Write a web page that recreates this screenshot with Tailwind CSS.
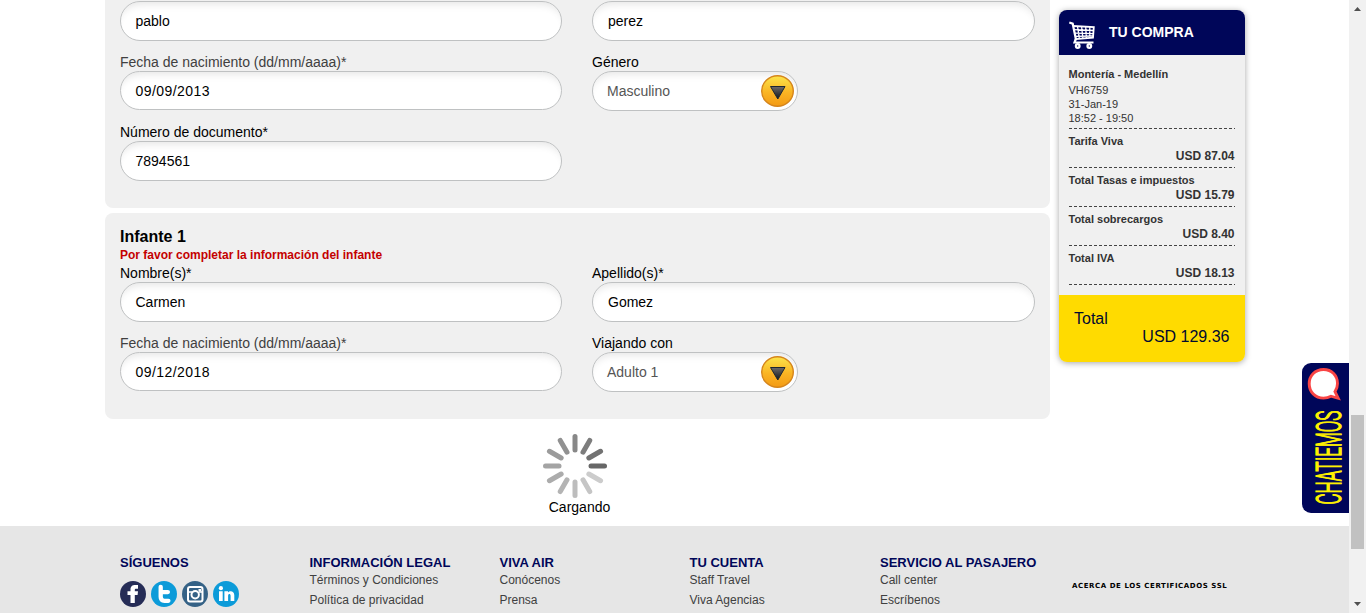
<!DOCTYPE html>
<html lang="es">
<head>
<meta charset="utf-8">
<title>Viva Air - Pasajeros</title>
<script src="https://cdn.jsdelivr.net/npm/@tailwindcss/browser@4"></script>
</head>
<body class="bg-white overflow-hidden font-['Liberation_Sans',Arial,sans-serif] text-[14px] text-black">
<div class="flex h-[613px] w-[1366px] overflow-hidden">
  <div class="relative flex h-full w-[1349px] flex-col">
    <div class="flex h-[526px] shrink-0 items-start gap-[9px] pl-[105px]">
      <main class="w-[945px]">
        <section class="rounded-b-[8px] bg-[#f0f0f0] px-[15px] h-[208px] pt-px">
          <div class="flex h-[52px] gap-[30px]">
            <div class="flex h-10 w-[442px] items-center rounded-[20px] border border-[#bfc1c2] bg-white px-[14.5px] shadow-[inset_0_8px_8px_-6px_#e4e4e4]">pablo</div>
            <div class="flex h-10 w-[443px] items-center rounded-[20px] border border-[#bfc1c2] bg-white px-[15px] shadow-[inset_0_8px_8px_-6px_#e4e4e4]">perez</div>
          </div>
          <div class="flex h-[70px] gap-[30px]">
            <div class="w-[442px]">
              <div class="h-[18px] leading-[18px] text-[#404040]">Fecha de nacimiento (dd/mm/aaaa)*</div>
              <div class="flex h-[39px] items-center rounded-[20px] border border-[#bfc1c2] bg-white px-[14.5px] pt-px tracking-[0.45px] shadow-[inset_0_8px_8px_-6px_#e4e4e4]">09/09/2013</div>
            </div>
            <div>
              <div class="h-[18px] leading-[18px]">Género</div>
              <div class="flex h-10 w-[206px] items-center justify-between rounded-[20px] border border-[#bfc1c2] bg-white pl-[14px] pr-[3px] text-[#555] shadow-[inset_0_8px_8px_-6px_#e4e4e4]">
                <span>Masculino</span>
                <svg width="33" height="32" viewBox="0 0 33 32"><defs><linearGradient id="gold" x1="0" y1="0" x2="0" y2="1"><stop offset="0" stop-color="#fce54a"/><stop offset=".55" stop-color="#fab424"/><stop offset="1" stop-color="#f39a14"/></linearGradient><linearGradient id="tri" x1="0" y1="0" x2="0" y2="1"><stop offset="0" stop-color="#6e6a68"/><stop offset=".6" stop-color="#33363a"/><stop offset="1" stop-color="#101820"/></linearGradient></defs><ellipse cx="16.500" cy="16" rx="15.800" ry="15.300" fill="url(#gold)" stroke="#d5851c" stroke-width="1.400"/><path d="M9.500 11.500h14.500L16.800 24z" fill="url(#tri)" stroke="#1d2630"/></svg>
              </div>
            </div>
          </div>
          <div class="w-[442px]">
            <div class="h-[18px] leading-[18px]">Número de documento*</div>
            <div class="flex h-10 items-center rounded-[20px] border border-[#bfc1c2] bg-white px-[14.5px] shadow-[inset_0_8px_8px_-6px_#e4e4e4]">7894561</div>
          </div>
        </section>

        <section class="mt-[5px] h-[206px] rounded-[8px] bg-[#f0f0f0] px-[15px] pt-[14px]">
          <h2 class="h-[19px] text-[16px] leading-[19px] font-bold">Infante 1</h2>
          <p class="h-[18px] text-[12px] leading-[18px] font-bold text-[#c40000]">Por favor completar la información del infante</p>
          <div class="flex h-[70px] gap-[30px]">
            <div class="w-[442px]">
              <div class="h-[18px] leading-[18px]">Nombre(s)*</div>
              <div class="flex h-10 items-center rounded-[20px] border border-[#bfc1c2] bg-white px-[14.5px] shadow-[inset_0_8px_8px_-6px_#e4e4e4]">Carmen</div>
            </div>
            <div class="w-[443px]">
              <div class="h-[18px] leading-[18px]">Apellido(s)*</div>
              <div class="flex h-10 items-center rounded-[20px] border border-[#bfc1c2] bg-white px-[15px] shadow-[inset_0_8px_8px_-6px_#e4e4e4]">Gomez</div>
            </div>
          </div>
          <div class="flex gap-[30px]">
            <div class="w-[442px]">
              <div class="h-[18px] leading-[18px] text-[#404040]">Fecha de nacimiento (dd/mm/aaaa)*</div>
              <div class="flex h-[39px] items-center rounded-[20px] border border-[#bfc1c2] bg-white px-[14.5px] pt-px tracking-[0.45px] shadow-[inset_0_8px_8px_-6px_#e4e4e4]">09/12/2018</div>
            </div>
            <div>
              <div class="h-[18px] leading-[18px]">Viajando con</div>
              <div class="flex h-10 w-[206px] items-center justify-between rounded-[20px] border border-[#bfc1c2] bg-white pl-[14px] pr-[3px] text-[#555] shadow-[inset_0_8px_8px_-6px_#e4e4e4]">
                <span>Adulto 1</span>
                <svg width="33" height="32" viewBox="0 0 33 32"><ellipse cx="16.500" cy="16" rx="15.800" ry="15.300" fill="url(#gold)" stroke="#d5851c" stroke-width="1.400"/><path d="M9.500 11.500h14.500L16.800 24z" fill="url(#tri)" stroke="#1d2630"/></svg>
              </div>
            </div>
          </div>
        </section>

        <div class="flex w-[949px] flex-col items-center pt-[15px]">
          <svg class="mr-[9px]" width="64" height="64" viewBox="-32 -32 64 64" stroke-width="5" stroke-linecap="round">
            <path d="M16 0H29.500" stroke="#676767"/>
            <path d="M16 0H29.500" stroke="#cccccc" transform="rotate(30)"/>
            <path d="M16 0H29.500" stroke="#c5c5c5" transform="rotate(60)"/>
            <path d="M16 0H29.500" stroke="#bdbdbd" transform="rotate(90)"/>
            <path d="M16 0H29.500" stroke="#b4b4b4" transform="rotate(120)"/>
            <path d="M16 0H29.500" stroke="#acacac" transform="rotate(150)"/>
            <path d="M16 0H29.500" stroke="#a4a4a4" transform="rotate(180)"/>
            <path d="M16 0H29.500" stroke="#9b9b9b" transform="rotate(210)"/>
            <path d="M16 0H29.500" stroke="#919191" transform="rotate(240)"/>
            <path d="M16 0H29.500" stroke="#888888" transform="rotate(270)"/>
            <path d="M16 0H29.500" stroke="#7d7d7d" transform="rotate(300)"/>
            <path d="M16 0H29.500" stroke="#727272" transform="rotate(330)"/>
          </svg>
          <div class="leading-[18px]">Cargando</div>
        </div>
      </main>

      <aside class="mt-[10px] h-[352px] w-[186px] overflow-hidden rounded-[8px] bg-[#f0f0f0] text-[11px] text-[#333] shadow-[0_1px_6px_rgba(0,0,0,0.35)]">
        <div class="flex h-[45px] items-center gap-[14px] bg-[#000659] pl-[10px] text-[14px] font-bold text-white">
          <svg class="mt-[4px]" width="26" height="28" viewBox="0 0 26 28" fill="none" stroke="#fff"><path d="M0.300 1.500l3.400 1.200 3.400 16.600" stroke-width="2.200"/><path d="M4 5L24.800 6.200 24 16.600 6.500 18.200" stroke-width="1.800"/><path d="M4.700 8.700L24.500 9.500M5.300 12.200L24.300 12.700M6 15.400L24 15M8.500 5.200L10.400 17.800M12.600 5.500L13.900 17.500M16.700 5.700L17.400 17.200M20.800 6L20.700 17" stroke-width="1.300"/><path d="M6.700 18.200l-1.200 3.300H24.500" stroke-width="2.200"/><circle cx="8.700" cy="25" r="1.800" stroke-width="2.300"/><circle cx="20.300" cy="25" r="1.800" stroke-width="2.300"/></svg>
          <span>TU COMPRA</span>
        </div>
        <div class="h-[240px] pl-[9.5px] pr-[10.5px] pt-[12px]">
          <div class="h-[16px] leading-[14px] font-bold">Montería - Medellín</div>
          <div class="leading-[14px]">VH6759</div>
          <div class="leading-[14px]">31-Jan-19</div>
          <div class="leading-[14px]">18:52 - 19:50</div>
          <div class="h-px w-[166px] mt-[3px] bg-[repeating-linear-gradient(90deg,#444_0_3px,transparent_3px_5px)]"></div>
          <div class="h-[38px] pt-[5px] font-bold"><div class="leading-[14px]">Tarifa Viva</div><div class="text-right text-[12px] leading-[17px]">USD 87.04</div></div>
          <div class="h-px w-[166px] bg-[repeating-linear-gradient(90deg,#444_0_3px,transparent_3px_5px)]"></div>
          <div class="h-[38px] pt-[5px] font-bold"><div class="leading-[14px]">Total Tasas e impuestos</div><div class="text-right text-[12px] leading-[17px]">USD 15.79</div></div>
          <div class="h-px w-[166px] bg-[repeating-linear-gradient(90deg,#444_0_3px,transparent_3px_5px)]"></div>
          <div class="h-[38px] pt-[5px] font-bold"><div class="leading-[14px]">Total sobrecargos</div><div class="text-right text-[12px] leading-[17px]">USD 8.40</div></div>
          <div class="h-px w-[166px] bg-[repeating-linear-gradient(90deg,#444_0_3px,transparent_3px_5px)]"></div>
          <div class="h-[38px] pt-[5px] font-bold"><div class="leading-[14px]">Total IVA</div><div class="text-right text-[12px] leading-[17px]">USD 18.13</div></div>
          <div class="h-px w-[166px] bg-[repeating-linear-gradient(90deg,#444_0_3px,transparent_3px_5px)]"></div>
        </div>
        <div class="h-[67px] bg-[#ffdb00] pl-[15px] pr-[15.5px] pt-[15px] text-[16px] leading-[18px] text-[#000a30]">
          <div>Total</div>
          <div class="text-right">USD 129.36</div>
        </div>
      </aside>
    </div>

    <footer class="flex h-[87px] bg-[#e6e6e6] pl-[120px] pt-[28px] text-[12px] leading-[20px] text-[#404040]">
      <div class="w-[189.5px]">
        <h3 class="h-4 text-[13px] leading-[17px] font-bold text-[#000659]">SÍGUENOS</h3>
        <div class="mt-[11px] flex gap-[5px]">
          <svg width="26" height="26" viewBox="0 0 26 26"><circle cx="13" cy="13" r="13" fill="#252c56"/><path d="M10.500 22v-8H7.500v-3.800h3V8.500C10.500 5.200 12.400 4 15.300 4H18v3.700h-1.700c-1.200 0-1.500.5-1.500 1.300v1.200h3.200L17.600 14h-2.800v8z" fill="#fff"/></svg>
          <svg width="26" height="26" viewBox="0 0 26 26"><circle cx="13" cy="13" r="13" fill="#0c9bd9"/><path d="M10.300 6v10c0 2.800 1.300 4 3.800 4H18M10.300 11.300H17.500" fill="none" stroke="#fff" stroke-width="4.300" stroke-linecap="round" stroke-linejoin="round" transform="translate(-.6 -.2)"/></svg>
          <svg width="26" height="26" viewBox="0 0 26 26"><circle cx="13" cy="13" r="13" fill="#356286"/><rect x="6" y="6" width="14.500" height="14.500" rx="2" fill="none" stroke="#fff" stroke-width="2"/><path d="M6 11h4M17 11h4" stroke="#fff" stroke-width="1.500"/><circle cx="13.200" cy="13.800" r="3.700" fill="#356286" stroke="#fff" stroke-width="2"/><path d="M16.500 8h2.500v2.500h-2.500z" fill="#fff"/></svg>
          <svg width="26" height="26" viewBox="0 0 26 26"><circle cx="13" cy="13" r="13" fill="#0c9bd9"/><path d="M6 10.300h3.700V20H6zM11.400 10.300h3.600v1.300c1.500-2.300 6.300-2 6.300 2.700V20h-3.700v-5c0-2.600-2.500-2.400-2.500 0v5h-3.700z" fill="#fff"/><circle cx="7.900" cy="7.200" r="2.100" fill="#fff"/></svg>
        </div>
      </div>
      <div class="w-[190px]">
        <h3 class="h-4 text-[13px] leading-[17px] font-bold text-[#000659]">INFORMACIÓN LEGAL</h3>
        <div>Términos y Condiciones</div>
        <div>Política de privacidad</div>
      </div>
      <div class="w-[190px]">
        <h3 class="h-4 text-[13px] leading-[17px] font-bold text-[#000659]">VIVA AIR</h3>
        <div>Conócenos</div>
        <div>Prensa</div>
      </div>
      <div class="w-[190.500px]">
        <h3 class="h-4 text-[13px] leading-[17px] font-bold text-[#000659]">TU CUENTA</h3>
        <div>Staff Travel</div>
        <div>Viva Agencias</div>
      </div>
      <div class="w-[192px]">
        <h3 class="h-4 text-[13px] leading-[17px] font-bold text-[#000659]">SERVICIO AL PASAJERO</h3>
        <div>Call center</div>
        <div>Escríbenos</div>
      </div>
      <div class="pt-[27px] font-['DejaVu_Sans',sans-serif] text-[7px] leading-[10px] font-bold tracking-[0.57px] whitespace-nowrap text-black">ACERCA DE LOS CERTIFICADOS SSL</div>
    </footer>

    <div class="absolute top-[363px] right-0 h-[150px] w-[47px] rounded-l-[9px] bg-[#000659]">
      <svg class="overflow-visible" width="47" height="150" viewBox="0 0 47 150">
        <path d="M21.500 6.500C29.800 6.500 35.500 12.500 35.500 20.500c0 3.200-.9 5.900-2.500 8.200l3.200 6.600-7.200-2.100c-2.200 1.200-4.700 1.900-7.500 1.900C13.200 35.100 7.200 29 7.200 20.800S13.200 6.500 21.500 6.500z" fill="#fff" stroke="#f94545" stroke-width="2.900"/>
        <text transform="translate(39 141.500) rotate(-90)" font-family="Roboto, sans-serif" font-weight="300" font-size="35" textLength="94" lengthAdjust="spacingAndGlyphs" fill="#fff200" stroke="#fff200" stroke-width="1.400" vector-effect="non-scaling-stroke">CHATIEMOS</text>
      </svg>
    </div>
  </div>

  <div class="flex h-full w-[17px] flex-col items-center justify-between bg-[#f1f1f1] py-[7px]">
    <svg width="7" height="4" viewBox="0 0 7 4"><path d="M0 4L3.500 0 7 4z" fill="#505050"/></svg>
    <div class="mt-[404px] mb-auto h-[134px] w-[13px] bg-[#c1c1c1]"></div>
    <svg width="7" height="4" viewBox="0 0 7 4"><path d="M0 0L3.500 4 7 0z" fill="#505050"/></svg>
  </div>
</div>
</body>
</html>
